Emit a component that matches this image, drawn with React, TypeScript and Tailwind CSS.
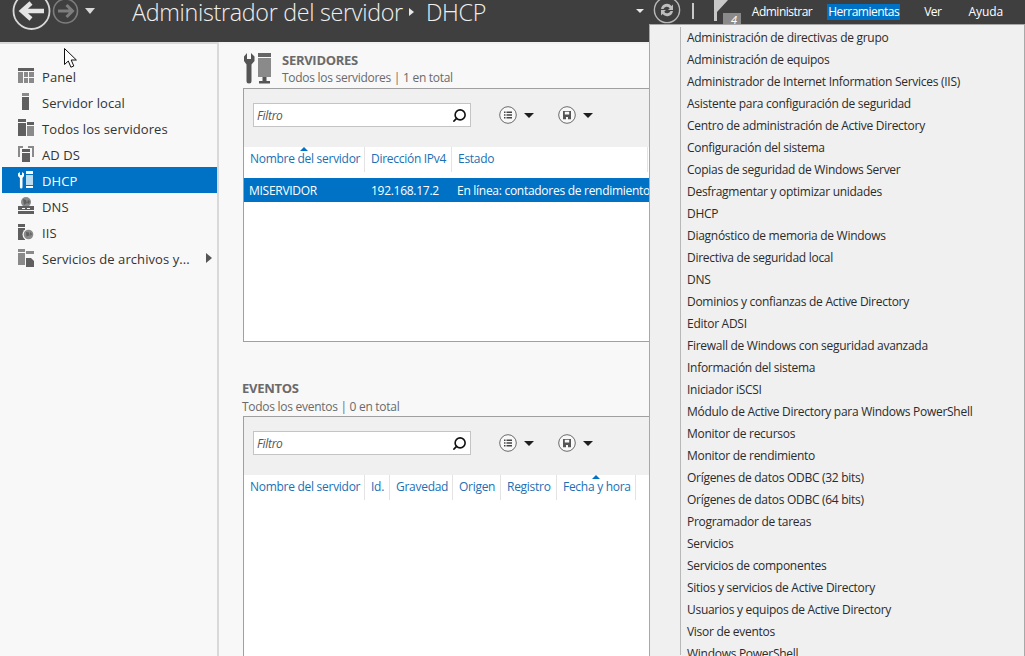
import { Search } from "lucide-react";

const NAV = [
  { label: "Panel", icon: "panel" },
  { label: "Servidor local", icon: "local" },
  { label: "Todos los servidores", icon: "all" },
  { label: "AD DS", icon: "adds" },
  { label: "DHCP", icon: "dhcp" },
  { label: "DNS", icon: "dns" },
  { label: "IIS", icon: "iis" },
  { label: "Servicios de archivos y...", icon: "files" },
];

const TOOLS = [
  "Administración de directivas de grupo",
  "Administración de equipos",
  "Administrador de Internet Information Services (IIS)",
  "Asistente para configuración de seguridad",
  "Centro de administración de Active Directory",
  "Configuración del sistema",
  "Copias de seguridad de Windows Server",
  "Desfragmentar y optimizar unidades",
  "DHCP",
  "Diagnóstico de memoria de Windows",
  "Directiva de seguridad local",
  "DNS",
  "Dominios y confianzas de Active Directory",
  "Editor ADSI",
  "Firewall de Windows con seguridad avanzada",
  "Información del sistema",
  "Iniciador iSCSI",
  "Módulo de Active Directory para Windows PowerShell",
  "Monitor de recursos",
  "Monitor de rendimiento",
  "Orígenes de datos ODBC (32 bits)",
  "Orígenes de datos ODBC (64 bits)",
  "Programador de tareas",
  "Servicios",
  "Servicios de componentes",
  "Sitios y servicios de Active Directory",
  "Usuarios y equipos de Active Directory",
  "Visor de eventos",
  "Windows PowerShell",
];

function NavIcon({ name, active }: { name: string; active: boolean }) {
  const c = active ? "#ffffff" : "#5f5f5f";
  const l = active ? "#bcdcf2" : "#8a8a8a";
  return (
    <svg width="18" height="18" viewBox="0 0 18 18" className="shrink-0">
      {name === "panel" && (
        <>
          <rect x="1" y="1" width="16" height="3" fill={c} />
          <rect x="1" y="5" width="5" height="11" fill={l} />
          <rect x="7" y="5" width="4" height="5" fill={l} />
          <rect x="12" y="5" width="5" height="5" fill={l} />
          <rect x="7" y="11" width="4" height="5" fill={l} />
          <rect x="12" y="11" width="5" height="5" fill={l} />
        </>
      )}
      {name === "local" && (
        <>
          <rect x="5" y="0" width="7" height="3" fill={l} />
          <rect x="5" y="4" width="7" height="13" fill={c} />
        </>
      )}
      {name === "all" && (
        <>
          <rect x="1" y="0" width="8" height="3" fill={c} />
          <rect x="1" y="4" width="8" height="13" fill={c} />
          <rect x="10" y="3" width="7" height="3" fill={c} />
          <rect x="10" y="7" width="7" height="10" fill={l} />
        </>
      )}
      {name === "adds" && (
        <>
          <path d="M1 1h5v2H3v9H1z M11 1h6v11h-2V3h-4z" fill={l} />
          <rect x="5" y="4" width="8" height="3" fill={c} />
          <rect x="5" y="8" width="8" height="9" fill={c} />
        </>
      )}
      {name === "dhcp" && (
        <>
          <path d="M1 2.5 3 1v3h2V1l2 1.5V5L5.5 7v9.2a1.2 1.2 0 0 1-2.6 0V7L1 5z" fill="#ffffff" />
          <rect x="9" y="0" width="7" height="3" fill="#ffffff" />
          <rect x="9" y="4" width="7" height="10" fill={l} />
          <rect x="9" y="15" width="7" height="2" fill="#ffffff" />
        </>
      )}
      {name === "dns" && (
        <>
          <circle cx="9" cy="5" r="5" fill={l} />
          <path d="M6 2l3 1 1 3-3 2zM11 3l2 1-1 3-2-1z" fill={c} />
          <rect x="1" y="9" width="16" height="4" fill={c} />
          <rect x="1" y="14" width="16" height="3" fill={c} />
          <rect x="5" y="11" width="3" height="1" fill="#f8f8f8" />
          <rect x="10" y="11" width="3" height="1" fill="#f8f8f8" />
        </>
      )}
      {name === "iis" && (
        <>
          <rect x="1" y="1" width="7" height="3" fill={c} />
          <rect x="1" y="5" width="7" height="12" fill={c} />
          <circle cx="11.5" cy="11.5" r="6" fill="#f8f8f8" />
          <circle cx="11.5" cy="11.5" r="4.8" fill={l} />
          <path d="M9 9l3 .5.5 3-3 1zM13 9l2 2-1.5 2z" fill={c} />
        </>
      )}
      {name === "files" && (
        <>
          <rect x="1" y="0" width="7" height="3" fill={l} />
          <rect x="1" y="4" width="7" height="12" fill={l} />
          <rect x="9" y="2" width="8" height="3" fill={l} />
          <path d="M9 9h5l3 3v6H9z" fill={c} />
        </>
      )}
    </svg>
  );
}

function RoundDropdown({ kind }: { kind: "list" | "save" }) {
  return (
    <div className="flex items-center gap-[7px]">
      <svg width="18" height="18" viewBox="0 0 18 18">
        <circle cx="9" cy="9" r="8.3" fill="#f8f8f8" stroke="#6a6a6a" />
        {kind === "list" ? (
          <path d="M5 5.5h1.5V7H5zM7.5 5.5H13V7H7.5zM5 8.3h1.5v1.5H5zM7.5 8.3H13v1.5H7.5zM5 11h1.5v1.5H5zM7.5 11H13v1.5H7.5z" fill="#444444" />
        ) : (
          <path d="M5 5h8v8.2H5z M6.8 5.8v2.8h4.4V5.8z M8 11v2.2h2V11z" fill="#555555" fillRule="evenodd" />
        )}
      </svg>
      <div className="w-0 h-0 border-x-[5px] border-x-transparent border-t-[5px] border-t-[#1f1f1f]" />
    </div>
  );
}

function Toolbar() {
  return (
    <div className="h-[58px] bg-[#f0f0f0] flex items-start pt-[14px] pl-[9px] shrink-0">
      <div className="w-[218px] h-[24px] bg-white border border-[#c4c4c4] flex items-center justify-between px-[3px] mr-[28px]">
        <span className="italic text-[#555555] text-[12px] mt-[2px]">Filtro</span>
        <Search size={15} strokeWidth={2.6} className="text-[#111111] -scale-x-100" />
      </div>
      <div className="flex items-center gap-[24px] h-[24px]">
        <RoundDropdown kind="list" />
        <RoundDropdown kind="save" />
      </div>
    </div>
  );
}

function HeaderCell({ label, width, sorted }: { label: string; width: number; sorted?: boolean }) {
  return (
    <div
      className="relative h-[25px] pt-[4px] pl-[6px] border-r border-[#e3e3e3] text-[#1b6fb5] whitespace-nowrap shrink-0"
      style={{ width }}
    >
      {sorted && (
        <div className="absolute top-0 left-1/2 -translate-x-1/2 w-0 h-0 border-x-[4px] border-x-transparent border-b-[4px] border-b-[#0072c6]" />
      )}
      {label}
    </div>
  );
}

export default function App() {
  return (
    <div className="w-[1025px] h-[656px] overflow-hidden relative bg-[#f8f8f8] text-[12px] leading-[16px] text-[#333333] font-['Open_Sans','Noto_Sans',sans-serif] tracking-[-0.28px]">
      {/* Top bar */}
      <header className="h-[42px] bg-[#3f3f3f] flex items-center relative text-white">
        <svg width="110" height="42" viewBox="0 0 110 42" className="shrink-0 ml-[2px]">
          <circle cx="29.5" cy="11" r="18" fill="none" stroke="#d8d8d8" strokeWidth="1.8" />
          <path d="M20 11h22 M29 3 20 11l9 8" fill="none" stroke="#e4e4e4" strokeWidth="4.5" />
          <circle cx="63.5" cy="11" r="12" fill="none" stroke="#7d7d7d" strokeWidth="1.6" />
          <path d="M56 11h14 M64.5 5 70.5 11l-6 6" fill="none" stroke="#7d7d7d" strokeWidth="3" />
          <path d="M83 8h10l-5 6z" fill="#d8d8d8" />
        </svg>
        <div className="ml-[20px] mt-[-18px] flex items-center text-[23.3px] leading-[24px] font-light text-[#f0f0f0] tracking-[-0.3px] whitespace-nowrap">
          <span>Administrador del servidor</span>
          <span className="ml-[6px] mr-[12px] w-0 h-0 border-y-[4px] border-y-transparent border-l-[5px] border-l-[#e8e8e8]" />
          <span>DHCP</span>
        </div>
        <div className="ml-auto flex items-center mt-[-18px] h-[24px] tracking-[-0.5px]">
          <div className="w-0 h-0 border-x-[4px] border-x-transparent border-t-[4px] border-t-[#e8e8e8] mr-[9px] -mt-[2px]" />
          <svg width="28" height="28" viewBox="0 0 28 28" className="-mt-[4px]">
            <circle cx="14" cy="14" r="12.6" fill="none" stroke="#b8b8b8" strokeWidth="1.4" />
            <path d="M8 13a6 6 0 0 1 10.5-3l1.5-1.5V14h-5l1.8-1.8A3.6 3.6 0 0 0 10.5 13zM20 15a6 6 0 0 1-10.5 3L8 19.5V14h5l-1.8 1.8a3.6 3.6 0 0 0 6.3-.8z" fill="#bdbdbd" />
          </svg>
          <div className="w-[2px] h-[16px] bg-[#c8c8c8] ml-[11px] mr-[20px] -mt-[2px]" />
          <svg width="34" height="42" viewBox="0 0 34 42" className="mt-[18px] mr-[4px]">
            <path d="M0 0h3v21H0zM3 0h11L3 12z" fill="#c8c8c8" />
            <rect x="9" y="13" width="18" height="12" fill="#8a8a8a" />
            <text x="17" y="24" fontSize="11" fill="#ffffff" fontStyle="italic" fontFamily="Open Sans, sans-serif">4</text>
          </svg>
          <span className="mr-[15px]">Administrar</span>
          <span className="bg-[#0072c6] px-[1px] mr-[24px]">Herramientas</span>
          <span className="mr-[27px]">Ver</span>
          <span className="mr-[22px] tracking-[-0.1px]">Ayuda</span>
        </div>
      </header>

      <div className="flex h-[614px]">
        {/* Sidebar */}
        <aside className="w-[219px] shrink-0 pl-[2px] pt-[19px] border-r-2 border-r-[#d9d9d9] border-t-2 border-t-[#d9d9d9] bg-[#f8f8f8] text-[13px] tracking-[0.08px]">
          {NAV.map((n) => {
            const active = n.label === "DHCP";
            return (
              <div
                key={n.label}
                className={`h-[26px] flex items-center pl-[15px] gap-[7px] whitespace-nowrap relative ${active ? "bg-[#0072c6] text-white" : ""}`}
              >
                <NavIcon name={n.icon} active={active} />
                <span className="mt-[2px]">{n.label}</span>
                {n.icon === "files" && (
                  <span className="absolute right-[5px] w-0 h-0 border-y-[5px] border-y-transparent border-l-[6px] border-l-[#555555]" />
                )}
              </div>
            );
          })}
        </aside>

        {/* Main content */}
        <main className="flex-1 pl-[24px] bg-[#f8f8f8] border-t-2 border-t-[#f2f2f2]">
          <section className="h-[344px]">
            <div className="flex h-[44px] pt-[8px]">
              <svg width="30" height="34" viewBox="0 0 30 34" className="shrink-0 mr-[9px]">
                <path d="M1 4.5 4 1v6h4V1l3.5 3.5V9L8.5 12.5v16.5a2.4 2.4 0 0 1-5 0V12.5L1 9z" fill="#555555" />
                <rect x="15" y="1" width="13" height="4" fill="#666666" />
                <rect x="15" y="6" width="13" height="19" fill="#8a8a8a" />
                <rect x="19.5" y="25" width="4" height="4" fill="#555555" />
                <rect x="16" y="29" width="11" height="2.5" fill="#555555" />
              </svg>
              <div>
                <div className="font-bold text-[#6a6a6a] text-[13px] leading-[17px]">SERVIDORES</div>
                <div className="text-[#6a6a6a] leading-[17px]">Todos los servidores | 1 en total</div>
              </div>
            </div>
            <div className="h-[254px] border border-[#a0a0a0] border-r-0 bg-white">
              <Toolbar />
              <div className="flex bg-white">
                <HeaderCell label="Nombre del servidor" width={121} sorted />
                <HeaderCell label="Dirección IPv4" width={87} />
                <HeaderCell label="Estado" width={196} />
              </div>
              <div className="flex h-[24px] mt-[6px] pt-[1px] bg-[#0072c6] text-white items-center whitespace-nowrap">
                <span className="w-[127px] pl-[5px]">MISERVIDOR</span>
                <span className="w-[86px]">192.168.17.2</span>
                <span>En línea: contadores de rendimiento</span>
              </div>
            </div>
          </section>

          <section>
            <div className="h-[31px] -mt-[8px] -ml-[1px]">
              <div className="font-bold text-[#6a6a6a] text-[13px] leading-[17px] mb-[1px]">EVENTOS</div>
              <div className="text-[#6a6a6a] leading-[17px]">Todos los eventos | 0 en total</div>
            </div>
            <div className="h-[300px] mt-[5px] border border-[#a0a0a0] border-r-0 bg-white">
              <Toolbar />
              <div className="flex bg-white">
                <HeaderCell label="Nombre del servidor" width={121} />
                <HeaderCell label="Id." width={25} />
                <HeaderCell label="Gravedad" width={63} />
                <HeaderCell label="Origen" width={48} />
                <HeaderCell label="Registro" width={56} />
                <HeaderCell label="Fecha y hora" width={79} sorted />
              </div>
            </div>
          </section>
        </main>
      </div>

      {/* Herramientas menu */}
      <div className="absolute left-[649px] top-[24px] right-0 h-[640px] bg-[#f0f0f0] border border-[#a8a8a8] text-[#2b2b2b] pt-[2px] flex">
        <div className="w-[31px] border-r border-[#b8b8b8] shrink-0 mb-[8px]" />
        <ul className="pl-[6px]">
          {TOOLS.map((t) => (
            <li key={t} className="h-[22px] flex items-center whitespace-nowrap">{t}</li>
          ))}
        </ul>
      </div>

      {/* Mouse pointer */}
      <svg width="14" height="22" viewBox="0 0 14 22" className="absolute left-[64px] top-[48px]">
        <path d="M.5.5V16.5L4.3 13l2.6 6.2 2.9-1.2-2.6-6h5.2z" fill="#ffffff" stroke="#111111" strokeWidth="1" />
      </svg>
    </div>
  );
}
